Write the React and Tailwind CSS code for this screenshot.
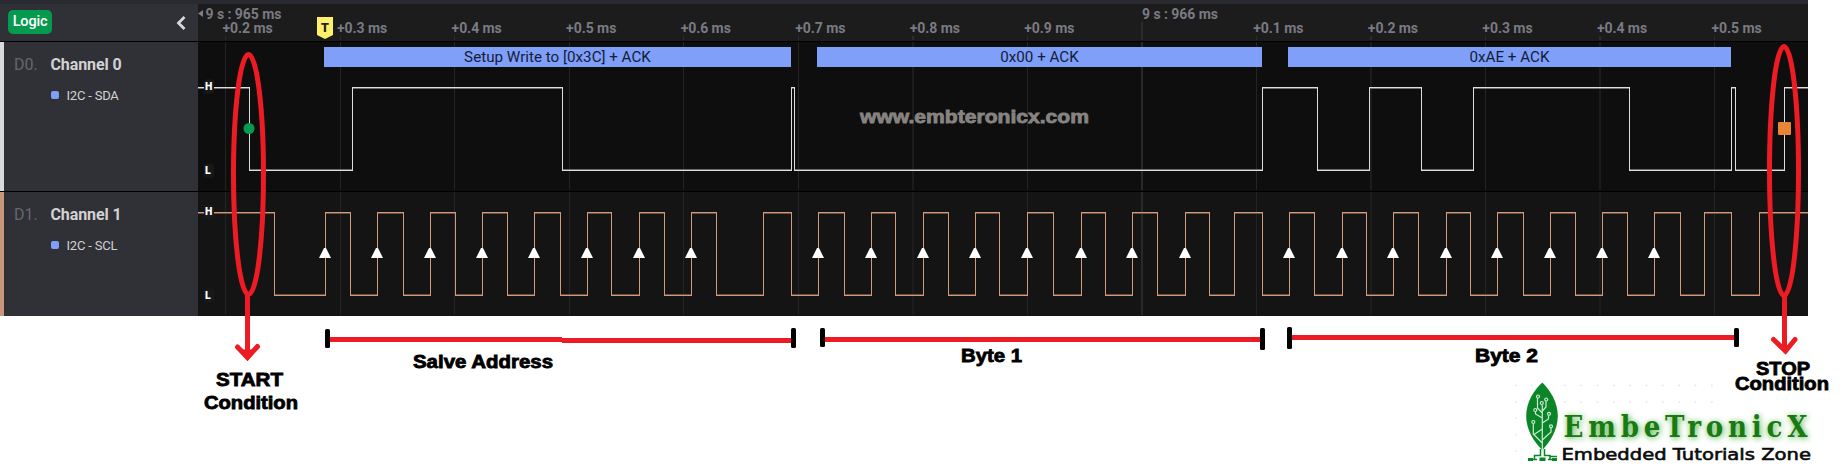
import React from 'react';

const LEFT = 198;
const GRID = [225, 340, 454, 569, 683, 798, 912, 1027, 1141, 1256, 1370, 1485, 1599, 1714];
const WIDE_GRID = [912, 1141, 1370, 1599];

const SDA = [249, 352, 562, 791, 794, 1262, 1317, 1369, 1421, 1473, 1629, 1731, 1735, 1784];
const SCL = [
  274, 325, 350, 377, 403, 430, 455, 482, 507, 534, 560, 587, 611, 639, 664, 691, 716, 763, 791,
  818, 844, 871, 895, 923, 948, 975, 999, 1027, 1053, 1081, 1105, 1132, 1157, 1185, 1209, 1234, 1262,
  1289, 1314, 1342, 1366, 1393, 1418, 1446, 1470, 1497, 1523, 1550, 1575, 1602, 1627, 1654, 1680, 1704,
  1731, 1759,
];
const CLOCKS = [
  325, 377, 430, 482, 534, 587, 639, 691, 818, 871, 923, 975, 1027, 1081, 1132, 1185, 1289, 1342, 1393,
  1446, 1497, 1550, 1602, 1654,
];
const TICKS = ['+0.2 ms', '+0.3 ms', '+0.4 ms', '+0.5 ms', '+0.6 ms', '+0.7 ms', '+0.8 ms', '+0.9 ms', '', '+0.1 ms', '+0.2 ms', '+0.3 ms', '+0.4 ms', '+0.5 ms'];

// Builds the bright outline and the dim one-pixel shadow of a digital trace that starts high.
function trace(edges, hi, lo) {
  let d = `M0 ${hi + 0.5}`;
  let dim = '';
  let from = 0;
  edges.forEach((e, i) => {
    const x = e - LEFT + 0.5;
    const falling = i % 2 === 0;
    d += `H${x}V${falling ? lo + 0.5 : hi + 0.5}`;
    dim += falling ? `M${from} ${hi + 1.5}H${x}` : `M${from} ${lo - 0.5}H${x}`;
    from = x;
  });
  d += 'H1610';
  dim += `M${from} ${hi + 1.5}H1610`;
  return { d, dim };
}

function Plot({ edges, hi, lo, height, color, dimColor, children }) {
  const t = trace(edges, hi, lo);
  return (
    <svg className="block" width="1610" height={height} viewBox={`0 0 1610 ${height}`}>
      {GRID.map((x) => (
        <rect key={x} x={x - LEFT} y="0" width={WIDE_GRID.includes(x) ? 2 : 1} height={height - 1} fill={x === 1141 ? '#29292b' : WIDE_GRID.includes(x) ? '#1c1c1d' : '#242427'} />
      ))}
      <g shapeRendering="crispEdges" fill="none">
        <path d={t.dim} stroke={dimColor} />
        <path d={t.d} stroke={color} />
      </g>
      {[['H', hi - 0.5], ['L', lo + 0.7]].map(([s, y]) => (
        <g key={s}>
          <rect x="6" y={y - 7} width="10" height="14" rx="2" fill="#181818" />
          <text x="7" y={y + 3.5} fontSize="10.5" fontWeight="900" fill="#fff" fontFamily="Roboto, sans-serif">{s}</text>
        </g>
      ))}
      {children}
    </svg>
  );
}

function ChannelInfo({ id, name, signal, height, bar }) {
  return (
    <div className={`flex w-[198px] shrink-0 bg-[#303136] ${height}`}>
      <div className={`w-1 shrink-0 ${bar}`} />
      <div className="flex pl-[10px] pt-[13px]">
        <div className="w-[36.5px] text-base leading-5 text-[#66676c]">{id}</div>
        <div>
          <div className="whitespace-nowrap text-base font-bold leading-5 tracking-[-0.1px] text-[#d2d2d3]">{name}</div>
          <div className="mt-[12px] flex items-center gap-2">
            <div className="size-2 rounded-[2px] bg-[#7f9ff9]" />
            <div className="relative top-px whitespace-nowrap text-[13px] leading-4 tracking-[-0.2px] text-[#d2d2d3]">{signal}</div>
          </div>
        </div>
      </div>
    </div>
  );
}

function Caption({ x, y, w, children, size = 18, fill = '#000' }) {
  return (
    <text x={x} y={y} textLength={w} lengthAdjust="spacingAndGlyphs" fontSize={size} fontWeight="700" fill={fill} stroke={fill} strokeWidth="0.8" fontFamily="'Liberation Sans', sans-serif">
      {children}
    </text>
  );
}

function Annotations() {
  return (
    <svg className="pointer-events-none absolute left-0 top-0" width="1844" height="476" viewBox="0 0 1844 476">
      <g fill="none" stroke="#ed1c24" strokeWidth="5">
        <ellipse cx="248.5" cy="174.5" rx="15" ry="120" />
        <ellipse cx="1784" cy="171" rx="14.5" ry="124.5" />
        <path d="M247.5 295V357M1784.5 297V350" />
        <path d="M237.5 347L247.5 357.5L257.5 346.5" strokeLinecap="round" />
        <path d="M1773.5 339.5L1785.5 351L1795 339.5" strokeLinecap="round" />
        <path d="M330 339.5H562M562 340.5H791M825 339.5H1260M1292 337.5H1734" />
      </g>
      <path d="M241 349L247.5 350L254 349L247.5 361Z" fill="#ed1c24" />
      {[[325, 329, 19], [791, 328, 20], [820, 328, 19], [1260, 328, 22], [1287, 327, 22], [1734, 328, 19]].map(([x, y, h]) => (
        <rect key={x} x={x} y={y} width="5" height={h} rx="1.5" />
      ))}
      <Caption x={216} y={386} w={67}>START</Caption>
      <Caption x={204} y={409} w={94}>Condition</Caption>
      <Caption x={413} y={368} w={140}>Salve Address</Caption>
      <Caption x={961} y={362} w={61}>Byte 1</Caption>
      <Caption x={1475} y={362} w={63}>Byte 2</Caption>
      <Caption x={1756} y={375} w={54}>STOP</Caption>
      <Caption x={1735} y={390} w={94}>Condition</Caption>
      <Caption x={860} y={123} w={229} fill="#878381">www.embteronicx.com</Caption>
    </svg>
  );
}

function Logo() {
  const dots = [];
  for (let r = 0; r < 5; r++) {
    for (let c = 0; c < 13; c++) {
      if (c === 0 || (r < 2 && c > 2) || (r === 0 && c === 1)) dots.push([15.7 + c * 16.35, 15.5 + r * 16.4]);
    }
  }
  return (
    <svg className="block" width="344" height="106" viewBox="0 0 344 106">
      {dots.map(([x, y]) => <circle key={`${x}-${y}`} cx={x} cy={y} r="0.9" fill="#e6e6e6" />)}
      <path d="M42.3 12.5C50 20 57.8 32 57.8 46C57.8 60 50 72 42.3 80C34 72 26.2 60 26.2 46C26.2 32 34 20 42.3 12.500Z" fill="#0a8528" />
      <g fill="none" stroke="#cfe9d3" strokeWidth="1.2">
        <path d="M42.3 82V35M42.3 59L33.3 65M42.3 53L48.5 49V45.5M42.3 48L35.5 44V41.5M42.3 43L37.5 38V28M42.3 41L46 37V31M42.3 73L33.3 64V54M42.3 70L51 62V58" />
        <circle cx="38" cy="26.5" r="1.5" />
        <circle cx="46.2" cy="29.5" r="1.5" />
        <circle cx="41.8" cy="33" r="1.5" />
        <circle cx="35.3" cy="40" r="1.5" />
        <circle cx="49" cy="43.8" r="1.5" />
        <circle cx="33.3" cy="52" r="1.5" />
        <circle cx="51" cy="56.3" r="1.5" />
      </g>
      <g fill="none" stroke="#0a8528" strokeWidth="1.5">
        <path d="M40.5 79V85.5H34.5V89.500M44.5 79V85.5H50V89.500M29 89.5H37M48 89.5H56M50 86.5H57" />
      </g>
      <g fill="#0a8528">
        <rect x="28" y="88" width="5" height="3" />
        <rect x="39.5" y="87.5" width="6" height="3.5" />
        <rect x="52" y="88" width="5" height="3" />
      </g>
      <text x="63.5" y="66.7" textLength="244" fontSize="29" fontWeight="700" fill="#187a12" fontFamily="'DejaVu Serif Condensed', 'DejaVu Serif', serif" className="[text-shadow:1px_1px_6px_#4fae3f]">EmbeTronicX</text>
      <text x="61.5" y="89.5" textLength="249.5" lengthAdjust="spacingAndGlyphs" fontSize="16" fill="#0c0c0c" stroke="#0c0c0c" strokeWidth="0.6" fontFamily="'DejaVu Sans', sans-serif">Embedded Tutorials Zone</text>
    </svg>
  );
}

export default function App() {
  return (
    <div className="relative flex h-[476px] w-[1844px] flex-col overflow-hidden bg-white font-['Roboto',sans-serif]">
      <div className="w-[1808px] bg-black">
        <div className="h-1 bg-[#292b30]" />
        <div className="flex h-[37px]">
          <div className="flex w-[198px] shrink-0 items-center justify-between bg-[#303136] pl-2 pr-[12px]">
            <div className="mb-px flex h-6 w-11 items-center justify-center rounded-[5px] bg-[#069a4f] text-[14.5px] font-medium tracking-[-0.2px] text-white">Logic</div>
            <svg className="block" width="10" height="14" viewBox="0 0 10 14">
              <path d="M8.5 1L2.5 7L8.5 13" fill="none" stroke="#d8d8d8" strokeWidth="2.8" />
            </svg>
          </div>
          <div className="relative w-[1610px] bg-[#1c1c1c] text-sm font-bold tracking-[-0.05px] text-[#7a7a83]">
            <svg className="absolute left-0 top-0" width="1610" height="37" viewBox="0 0 1610 37">
              {GRID.map((x) => (
                <rect key={x} x={x - LEFT} y={x === 1141 ? 18 : 32} width={WIDE_GRID.includes(x) ? 2 : 1} height={x === 1141 ? 18 : 4} fill="#2c2c2e" />
              ))}
              <path d="M0 9.5L5 6V13Z" fill="#7d7d86" />
              <path d="M119 13H135V31L127 35L119 31Z" fill="#fdf06a" />
              <text x="127" y="27.5" textAnchor="middle" fontSize="12.5" fontWeight="900" fill="#222">T</text>
            </svg>
            <div className="flex h-[14px] pl-[7.5px] pt-[2px] leading-[15px]">
              <div className="w-[936.5px] pt-[0.5px]">9 s : 965 ms</div>
              <div className="whitespace-nowrap pt-[0.5px]">9 s : 966 ms</div>
            </div>
            <div className="flex pl-[24.5px] pt-[3px] leading-[15px]">
              {TICKS.map((t, i) => (
                <div key={i} className="w-[114.54px] shrink-0 whitespace-nowrap">{t}</div>
              ))}
            </div>
          </div>
        </div>

        <div className="mt-px flex h-[149px]">
          <ChannelInfo id="D0." name="Channel 0" signal="I2C - SDA" height="h-[149px]" bar="bg-[#d9dadb]" />
          <div className="relative w-[1610px] bg-[#0e0e0e]">
            <Plot edges={SDA} hi={45} lo={128} height={149} color="#dedede" dimColor="#706c6c">
              <circle cx="51" cy="86.5" r="5.5" fill="#069a4f" />
              <rect x="1580" y="80" width="13" height="13" rx="1" fill="#e88537" />
            </Plot>
            <div className="absolute left-[126px] top-[5px] flex gap-[26px] text-[15.2px] font-normal leading-5 text-[#141c38]">
              <div className="flex h-5 w-[467px] justify-center bg-[#7f9ff9]">Setup Write to [0x3C] + ACK</div>
              <div className="flex h-5 w-[445px] justify-center bg-[#7f9ff9]">0x00 + ACK</div>
              <div className="flex h-5 w-[443px] justify-center bg-[#7f9ff9]">0xAE + ACK</div>
            </div>
          </div>
        </div>

        <div className="mt-px flex h-[124px]">
          <ChannelInfo id="D1." name="Channel 1" signal="I2C - SCL" height="h-[124px]" bar="bg-[#c9967c]" />
          <div className="w-[1610px] bg-[#141414]">
            <Plot edges={SCL} hi={20} lo={103} height={124} color="#d09a7b" dimColor="#6b5042">
              {CLOCKS.map((x) => (
                <path key={x} d={`M${x - LEFT - 1} 56H${x - LEFT + 1}L${x - LEFT + 6} 66H${x - LEFT - 6}Z`} fill="#fff" />
              ))}
            </Plot>
          </div>
        </div>
      </div>

      <div className="mt-[54px] pl-[1500px]">
        <Logo />
      </div>
      <Annotations />
    </div>
  );
}
